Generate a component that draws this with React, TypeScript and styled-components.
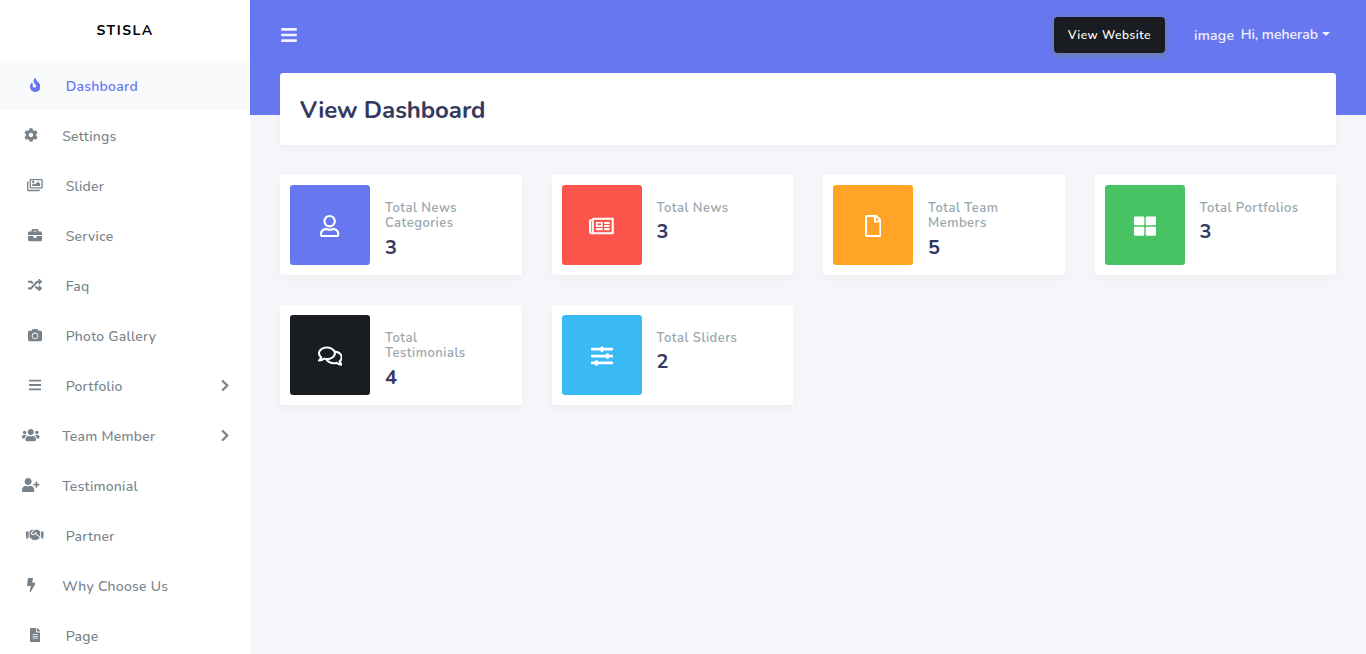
import React from "react";
import styled, { createGlobalStyle } from "styled-components";
import {
  FaFire, FaCog, FaRegImages, FaBriefcase, FaRandom, FaCamera, FaBars, FaUsers, FaUserPlus,
  FaHandshake, FaBolt, FaFileAlt, FaChevronRight, FaRegUser, FaRegNewspaper, FaRegFile,
  FaThLarge, FaRegComments, FaSlidersH,
} from "react-icons/fa";
import type { IconType } from "react-icons";

const GlobalStyle = createGlobalStyle`
  * { box-sizing: border-box; }
  body {
    margin: 0;
    background: #f4f6f9;
    color: #6c757d;
    font-family: Nunito, Lato, "Liberation Sans", sans-serif;
    font-size: 14px;
    overflow: hidden;
  }
  svg { display: block; height: 1em; }
`;

const Page = styled.div`
  display: flex;
  height: 654px;
  overflow: hidden;
`;

const Sidebar = styled.aside`
  flex: 0 0 250px;
  background: #fff;
  box-shadow: 0 4px 8px rgba(0, 0, 0, 0.03);
`;

const Brand = styled.div`
  height: 60px;
  line-height: 61px;
  text-align: center;
  color: #000;
  font-weight: 700;
  font-size: 14px;
  letter-spacing: 1.5px;
`;

const MenuItem = styled.a<{ $active?: boolean }>`
  display: flex;
  align-items: center;
  height: 50px;
  padding: 0 20px;
  color: ${(p) => (p.$active ? "#6777ef" : "#78828a")};
  background: ${(p) => (p.$active ? "#f8fafb" : "transparent")};
  font-weight: ${(p) => (p.$active ? 600 : 500)};
`;

const MenuIcon = styled.span<{ $wide: boolean; $ratio: number }>`
  display: flex;
  justify-content: center;
  width: ${(p) => (p.$wide ? 30 : 22)}px;
  margin-right: ${(p) => (p.$wide ? 15.7 : 20.2)}px;

  svg {
    width: ${(p) => p.$ratio}em;
  }
`;

const MenuLabel = styled.span`
  flex: 1;
  line-height: 20px;
  padding-top: 3px;
  letter-spacing: 0.25px;
`;

const Expander = styled(FaChevronRight)`
  width: 0.625em;
  font-size: 13px;
  stroke: currentColor;
  stroke-width: 10px;
  margin-right: 0.5px;
`;

const Main = styled.main`
  flex: 1;
  padding: 0 30px;
  background: linear-gradient(#6777ef 115px, #f4f6f9 115px);
`;

const Navbar = styled.nav`
  display: flex;
  align-items: center;
  height: 70px;
  color: #fff;
`;

const Toggle = styled.span`
  flex: 1;
  color: #f2f2fe;
  font-size: 18px;
`;

const WebsiteButton = styled.a`
  height: 36px;
  width: 111px;
  line-height: 37px;
  border-radius: 4px;
  background: #191d21;
  box-shadow: 0 2px 6px #728394;
  color: #fff;
  text-align: center;
  font-size: 12px;
  font-weight: 600;
  letter-spacing: 0.5px;
`;

const Profile = styled.div`
  display: flex;
  align-items: center;
  margin: 0 6px 0 29px;
  color: #f2f2fe;
  font-weight: 600;
`;

const Avatar = styled.span`
  margin-right: 6.5px;
  letter-spacing: 0.25px;
`;

const Greeting = styled.span`
  padding-bottom: 1px;
`;

const Caret = styled.i`
  margin: 0 0 3px 4px;
  border-top: 4px solid currentColor;
  border-left: 4px solid transparent;
  border-right: 4px solid transparent;
`;

const Header = styled.header`
  height: 72px;
  margin-top: 3px;
  padding: 0 20px;
  border-radius: 3px;
  background: #fff;
  box-shadow: 0 4px 8px rgba(0, 0, 0, 0.03);
`;

const Title = styled.h1`
  margin: 0;
  color: #34395e;
  font-size: 24px;
  font-weight: 700;
  line-height: 74px;
  letter-spacing: -0.07px;
`;

const Cards = styled.section`
  display: grid;
  grid-template-columns: repeat(4, 1fr);
  gap: 30px;
  margin-top: 30px;
`;

const Card = styled.article`
  display: flex;
  height: 100px;
  padding: 10px;
  border-radius: 3px;
  background: #fff;
  box-shadow: 0 4px 8px rgba(0, 0, 0, 0.03);
`;

const CardIcon = styled.div<{ $color: string; $ratio: number }>`
  display: flex;
  align-items: center;
  justify-content: center;
  flex: 0 0 80px;
  height: 80px;
  padding-top: 1.5px;
  border-radius: 3px;
  background: ${(p) => p.$color};
  color: #fff;
  font-size: 22px;

  svg {
    width: ${(p) => p.$ratio}em;
  }
`;

const CardBody = styled.div`
  padding: 15.5px 0 0 15px;
`;

const CardLabel = styled.h4`
  margin: 0;
  color: #98a6ad;
  font-size: 13px;
  font-weight: 600;
  line-height: 15.6px;
  letter-spacing: 0.5px;
  white-space: pre-line;
`;

const CardValue = styled.div`
  margin-top: 3px;
  color: #34395e;
  font-size: 20px;
  font-weight: 700;
  line-height: 26px;
`;

interface Entry {
  label: string;
  icon: IconType;
  wide: boolean;
  ratio: number;
  expandable?: boolean;
}

const menu: Entry[] = [
  { label: "Dashboard", icon: FaFire, wide: true, ratio: 0.75 },
  { label: "Settings", icon: FaCog, wide: false, ratio: 1 },
  { label: "Slider", icon: FaRegImages, wide: true, ratio: 1.125 },
  { label: "Service", icon: FaBriefcase, wide: true, ratio: 1 },
  { label: "Faq", icon: FaRandom, wide: true, ratio: 1 },
  { label: "Photo Gallery", icon: FaCamera, wide: true, ratio: 1 },
  { label: "Portfolio", icon: FaBars, wide: true, ratio: 0.875, expandable: true },
  { label: "Team Member", icon: FaUsers, wide: false, ratio: 1.25, expandable: true },
  { label: "Testimonial", icon: FaUserPlus, wide: false, ratio: 1.25 },
  { label: "Partner", icon: FaHandshake, wide: true, ratio: 1.25 },
  { label: "Why Choose Us", icon: FaBolt, wide: false, ratio: 0.625 },
  { label: "Page", icon: FaFileAlt, wide: true, ratio: 0.75 },
];

interface Stat {
  label: string;
  value: number;
  icon: IconType;
  ratio: number;
  color: string;
}

const stats: Stat[] = [
  { label: "Total News\nCategories", value: 3, icon: FaRegUser, ratio: 0.875, color: "#6777ef" },
  { label: "Total News", value: 3, icon: FaRegNewspaper, ratio: 1.125, color: "#fc544b" },
  { label: "Total Team\nMembers", value: 5, icon: FaRegFile, ratio: 0.75, color: "#ffa426" },
  { label: "Total Portfolios", value: 3, icon: FaThLarge, ratio: 1, color: "#47c363" },
  { label: "Total\nTestimonials", value: 4, icon: FaRegComments, ratio: 1.125, color: "#191d21" },
  { label: "Total Sliders", value: 2, icon: FaSlidersH, ratio: 1, color: "#3abaf4" },
];

export default function App() {
  return (
    <Page>
      <GlobalStyle />
      <Sidebar>
        <Brand>STISLA</Brand>
        {menu.map(({ label, icon: Icon, wide, ratio, expandable }, i) => (
          <MenuItem key={label} $active={i === 0}>
            <MenuIcon $wide={wide} $ratio={ratio}><Icon /></MenuIcon>
            <MenuLabel>{label}</MenuLabel>
            {expandable && <Expander />}
          </MenuItem>
        ))}
      </Sidebar>
      <Main>
        <Navbar>
          <Toggle><FaBars /></Toggle>
          <WebsiteButton>View Website</WebsiteButton>
          <Profile>
            <Avatar>image</Avatar>
            <Greeting>Hi, meherab</Greeting>
            <Caret />
          </Profile>
        </Navbar>
        <Header><Title>View Dashboard</Title></Header>
        <Cards>
          {stats.map(({ label, value, icon: Icon, ratio, color }) => (
            <Card key={label}>
              <CardIcon $color={color} $ratio={ratio}><Icon /></CardIcon>
              <CardBody>
                <CardLabel>{label}</CardLabel>
                <CardValue>{value}</CardValue>
              </CardBody>
            </Card>
          ))}
        </Cards>
      </Main>
    </Page>
  );
}
